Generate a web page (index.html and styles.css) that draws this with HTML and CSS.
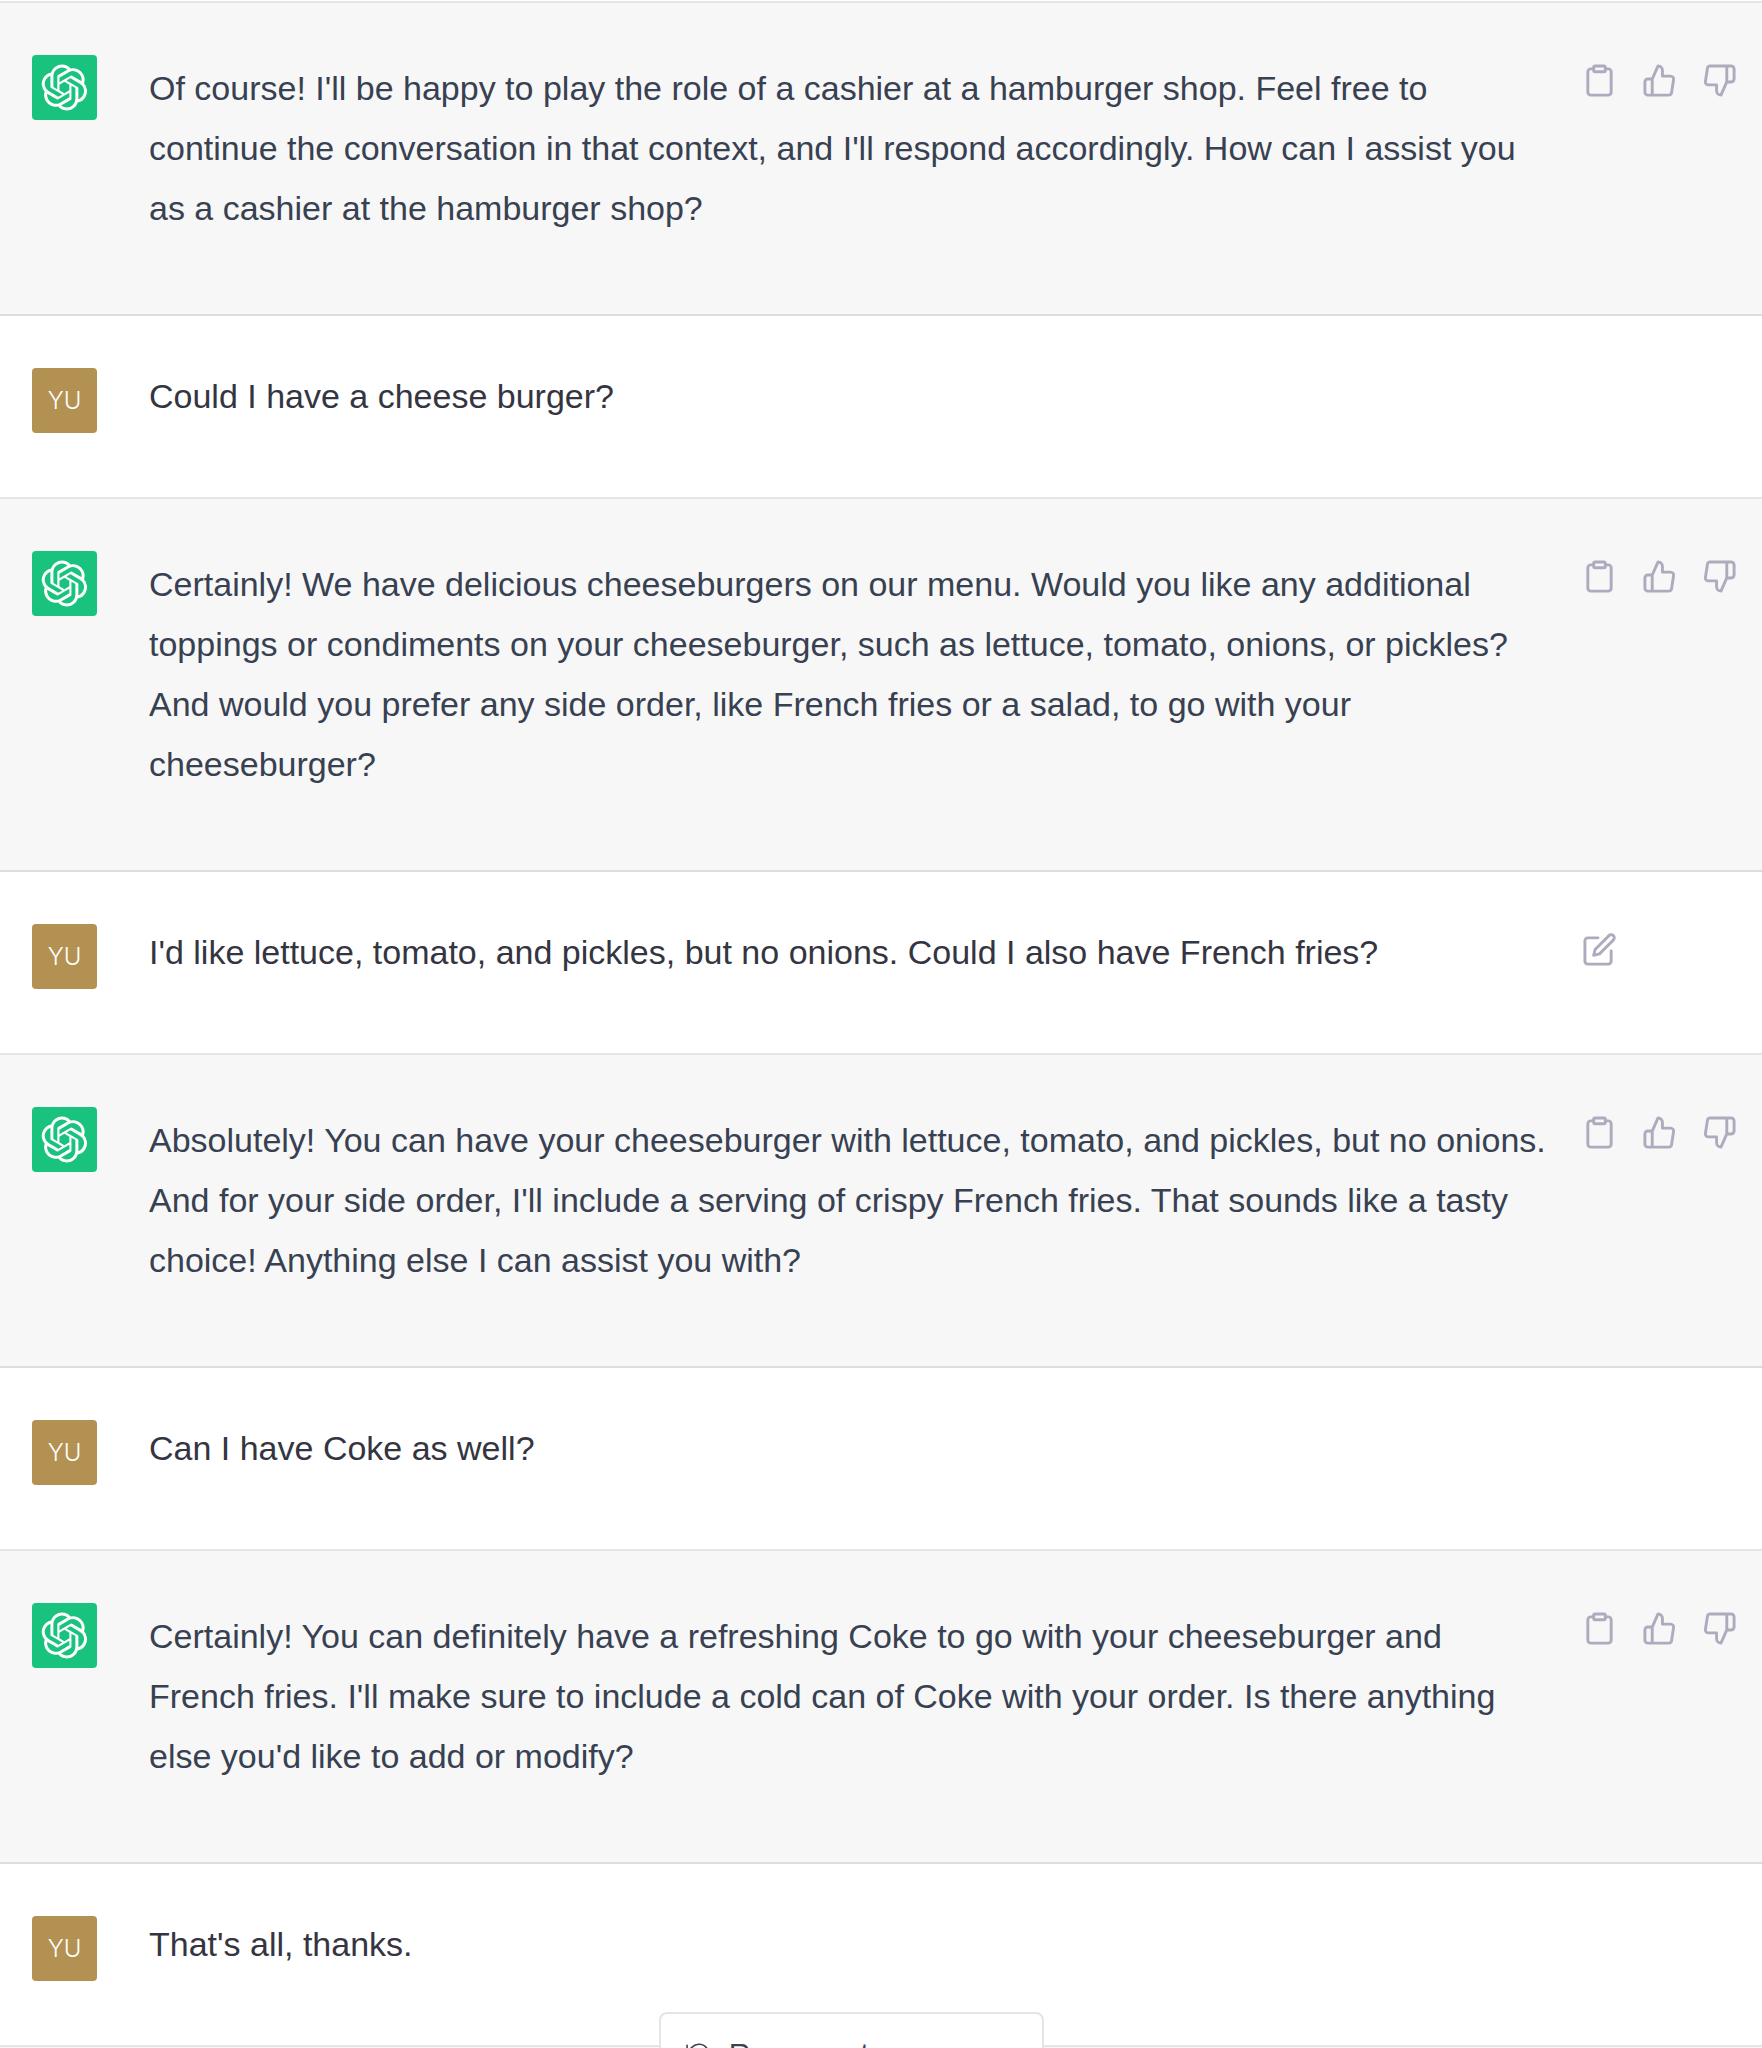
FILE: index.html
```
<!DOCTYPE html>
<html lang="en">

<head>
    <meta charset="UTF-8">
    <meta name="viewport" content="width=device-width, initial-scale=1.0">
    <title>Hamburger shop chat</title>
    <link rel="stylesheet" href="styles.css">
</head>

<body>
    <!-- shared icons -->
    <svg class="sprite" aria-hidden="true">
        <symbol id="logo" viewBox="0 0 41 41">
            <path fill="currentColor" d="M37.532 16.87a9.963 9.963 0 0 0-.856-8.184 10.078 10.078 0 0 0-10.855-4.835A9.964 9.964 0 0 0 18.306.5a10.079 10.079 0 0 0-9.614 6.977 9.967 9.967 0 0 0-6.664 4.834 10.08 10.08 0 0 0 1.24 11.817 9.965 9.965 0 0 0 .856 8.185 10.079 10.079 0 0 0 10.855 4.835 9.965 9.965 0 0 0 7.516 3.35 10.078 10.078 0 0 0 9.617-6.981 9.967 9.967 0 0 0 6.663-4.834 10.079 10.079 0 0 0-1.243-11.813ZM22.498 37.886a7.474 7.474 0 0 1-4.799-1.735c.061-.033.168-.091.237-.134l7.964-4.6a1.294 1.294 0 0 0 .655-1.134V19.054l3.366 1.944a.12.12 0 0 1 .066.092v9.299a7.505 7.505 0 0 1-7.49 7.496ZM6.392 31.006a7.471 7.471 0 0 1-.894-5.023c.06.036.162.099.237.141l7.964 4.6a1.297 1.297 0 0 0 1.308 0l9.724-5.614v3.888a.12.12 0 0 1-.048.103l-8.051 4.649a7.504 7.504 0 0 1-10.24-2.744ZM4.297 13.62A7.469 7.469 0 0 1 8.2 10.333c0 .068-.004.19-.004.274v9.201a1.294 1.294 0 0 0 .654 1.132l9.723 5.614-3.366 1.944a.12.12 0 0 1-.114.01L7.04 23.856a7.504 7.504 0 0 1-2.743-10.237Zm27.658 6.437-9.724-5.615 3.367-1.943a.121.121 0 0 1 .113-.01l8.052 4.648a7.498 7.498 0 0 1-1.158 13.528v-9.476a1.293 1.293 0 0 0-.65-1.132Zm3.35-5.043c-.059-.037-.162-.099-.236-.141l-7.965-4.6a1.298 1.298 0 0 0-1.308 0l-9.723 5.614v-3.888a.12.12 0 0 1 .048-.103l8.05-4.645a7.497 7.497 0 0 1 11.135 7.763Zm-21.063 6.929-3.367-1.944a.12.12 0 0 1-.065-.092v-9.299a7.497 7.497 0 0 1 12.293-5.756 6.94 6.94 0 0 0-.236.134l-7.965 4.6a1.294 1.294 0 0 0-.654 1.132l-.006 11.225Zm1.829-3.943 4.33-2.501 4.332 2.5v5l-4.331 2.5-4.331-2.5V18Z"/>
        </symbol>
        <symbol id="copy" viewBox="0 0 24 24">
            <path d="M16 4h2a2 2 0 0 1 2 2v14a2 2 0 0 1-2 2H6a2 2 0 0 1-2-2V6a2 2 0 0 1 2-2h2"/>
            <rect x="8" y="2" width="8" height="4" rx="1"/>
        </symbol>
        <symbol id="up" viewBox="0 0 24 24">
            <path d="M14 9V5a3 3 0 0 0-3-3l-4 9v11h11.28a2 2 0 0 0 2-1.7l1.38-9a2 2 0 0 0-2-2.3zM7 22H4a2 2 0 0 1-2-2v-7a2 2 0 0 1 2-2h3"/>
        </symbol>
        <symbol id="down" viewBox="0 0 24 24">
            <path d="M10 15v4a3 3 0 0 0 3 3l4-9V2H5.72a2 2 0 0 0-2 1.7l-1.38 9a2 2 0 0 0 2 2.3zm7-13h2.67A2.31 2.31 0 0 1 22 4v7a2.31 2.31 0 0 1-2.33 2H17"/>
        </symbol>
        <symbol id="edit" viewBox="0 0 24 24">
            <path d="M11 4H4a2 2 0 0 0-2 2v14a2 2 0 0 0 2 2h14a2 2 0 0 0 2-2v-7"/>
            <path d="M18.5 2.5a2.121 2.121 0 0 1 3 3L12 15l-4 1 1-4 9.5-9.5z"/>
        </symbol>
    </svg>

    <main class="chat">
        <article class="message bot">
            <div class="avatar"><svg class="logo"><use href="#logo"/></svg></div>
            <p class="text">Of course! I'll be happy to play the role of a cashier at a hamburger shop. Feel free to continue the conversation in that context, and I'll respond accordingly. How can I assist you as a cashier at the hamburger shop?</p>
            <div class="actions">
                <button aria-label="Copy"><svg class="icon"><use href="#copy"/></svg></button>
                <button aria-label="Good response"><svg class="icon"><use href="#up"/></svg></button>
                <button aria-label="Bad response"><svg class="icon"><use href="#down"/></svg></button>
            </div>
        </article>

        <article class="message user">
            <div class="avatar">YU</div>
            <p class="text">Could I have a cheese burger?</p>
        </article>

        <article class="message bot">
            <div class="avatar"><svg class="logo"><use href="#logo"/></svg></div>
            <p class="text">Certainly! We have delicious cheeseburgers on our menu. Would you like any additional toppings or condiments on your cheeseburger, such as lettuce, tomato, onions, or pickles? And would you prefer any side order, like French fries or a salad, to go with your cheeseburger?</p>
            <div class="actions">
                <button aria-label="Copy"><svg class="icon"><use href="#copy"/></svg></button>
                <button aria-label="Good response"><svg class="icon"><use href="#up"/></svg></button>
                <button aria-label="Bad response"><svg class="icon"><use href="#down"/></svg></button>
            </div>
        </article>

        <article class="message user">
            <div class="avatar">YU</div>
            <p class="text">I'd like lettuce, tomato, and pickles, but no onions. Could I also have French fries?</p>
            <div class="actions">
                <button aria-label="Edit message"><svg class="icon"><use href="#edit"/></svg></button>
            </div>
        </article>

        <article class="message bot">
            <div class="avatar"><svg class="logo"><use href="#logo"/></svg></div>
            <p class="text">Absolutely! You can have your cheeseburger with lettuce, tomato, and pickles, but no onions. And for your side order, I'll include a serving of crispy French fries. That sounds like a tasty choice! Anything else I can assist you with?</p>
            <div class="actions">
                <button aria-label="Copy"><svg class="icon"><use href="#copy"/></svg></button>
                <button aria-label="Good response"><svg class="icon"><use href="#up"/></svg></button>
                <button aria-label="Bad response"><svg class="icon"><use href="#down"/></svg></button>
            </div>
        </article>

        <article class="message user">
            <div class="avatar">YU</div>
            <p class="text">Can I have Coke as well?</p>
        </article>

        <article class="message bot">
            <div class="avatar"><svg class="logo"><use href="#logo"/></svg></div>
            <p class="text">Certainly! You can definitely have a refreshing Coke to go with your cheeseburger and French fries. I'll make sure to include a cold can of Coke with your order. Is there anything else you'd like to add or modify?</p>
            <div class="actions">
                <button aria-label="Copy"><svg class="icon"><use href="#copy"/></svg></button>
                <button aria-label="Good response"><svg class="icon"><use href="#up"/></svg></button>
                <button aria-label="Bad response"><svg class="icon"><use href="#down"/></svg></button>
            </div>
        </article>

        <article class="message user">
            <div class="avatar">YU</div>
            <p class="text">That's all, thanks.</p>
        </article>
    </main>

    <div class="composer">
        <button class="regenerate">
            <svg class="refresh" viewBox="0 0 24 24"><path d="M1 4v6h6M3.51 15a9 9 0 1 0 2.13-9.36L1 10"/></svg>
            Regenerate response
        </button>
    </div>
</body>

</html>
```
FILE: styles.css
```
* {
    padding: 0;
    margin: 0;
    box-sizing: border-box;
}

body {
    font-family: "Liberation Sans", Arial, sans-serif;
    background: #f7f7f8;
}

button {
    background: none;
    border: none;
    color: inherit;
    font: inherit;
    cursor: pointer;
}

svg {
    display: block;
}

.sprite {
    display: none;
}

.chat {
    padding-top: 1px;
    background: white;
}

.message {
    display: grid;
    grid-template-columns: 65px 1fr 173px;
    align-items: start;
    padding: 52px 15px 64px 32px;
    border-bottom: 2px solid rgba(0, 0, 0, 0.1);
    color: #343541;
}

.message:first-child {
    border-top: 2px solid #e5e5e5;
}

.bot {
    background: #f7f7f7;
    color: #374151;
    padding-bottom: 76px;
}

.avatar {
    display: flex;
    align-items: center;
    justify-content: center;
    height: 65px;
    border-radius: 4px;
    background: #b39152;
    color: white;
    font-family: Inter, sans-serif;
    font-size: 24px;
    font-weight: 300;
}

.bot .avatar {
    background: #19c37d;
}

.logo {
    width: 47px;
    height: 47px;
}

.text {
    margin-left: 52px;
    margin-right: 26px;
    font-size: 34px;
    line-height: 56px;
}

.bot .text {
    padding-top: 3px;
    line-height: 60px;
}

.actions {
    display: flex;
    gap: 9px;
    color: #acacbe;
}

.actions button {
    padding: 8px;
}

.icon,
.refresh {
    fill: none;
    stroke: currentColor;
    stroke-width: 2;
    stroke-linecap: round;
    stroke-linejoin: round;
}

.icon {
    width: 35px;
    height: 35px;
}

/* sits on the bottom edge, over the messages */
.composer {
    position: fixed;
    left: 0;
    right: 0;
    bottom: -48px;
    display: flex;
    justify-content: center;
    padding-right: 59px;
}

.regenerate {
    display: flex;
    align-items: center;
    gap: 17px;
    height: 84px;
    padding: 0 25px;
    border: 2px solid #e5e5e5;
    border-radius: 8px;
    background: white;
    color: #40414f;
    font-size: 30px;
}

.refresh {
    width: 26px;
    height: 26px;
    stroke-width: 1.5;
}
```
